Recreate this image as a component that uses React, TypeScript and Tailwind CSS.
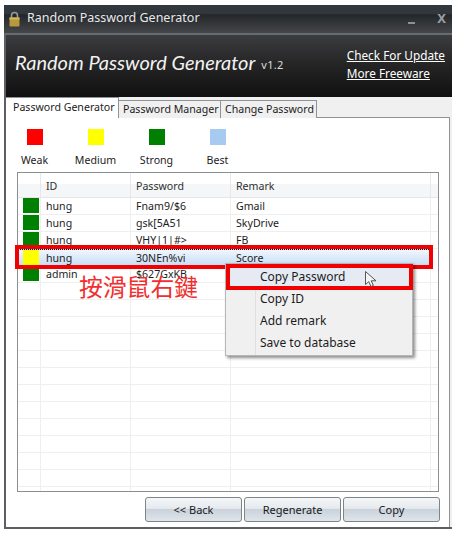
const rows = [
  { color: "bg-[#008000]", id: "hung", password: "Fnam9/$6", remark: "Gmail" },
  { color: "bg-[#008000]", id: "hung", password: "gsk[5A51", remark: "SkyDrive" },
  { color: "bg-[#008000]", id: "hung", password: "VHY|1|#>", remark: "FB" },
  { color: "bg-[#ffff00]", id: "hung", password: "30NEn%vi", remark: "Score", selected: true },
  { color: "bg-[#008000]", id: "admin", password: "$627GxKB", remark: "" },
  ...Array.from({ length: 13 }, () => ({ color: "", id: "", password: "", remark: "" })),
];

const levels = [
  { name: "Weak", color: "bg-[#ff0000]" },
  { name: "Medium", color: "bg-[#ffff00]" },
  { name: "Strong", color: "bg-[#008000]" },
  { name: "Best", color: "bg-[#a6caf0]" },
];

const buttonClass =
  "h-[25px] rounded-[3px] border border-[#7f8488] bg-[linear-gradient(#f4f6f8_0%,#e6eaee_45%,#c9d3dc_50%,#dfe5ea_100%)] text-center leading-[23px] text-[#1a1a1a]";

function Lock() {
  return (
    <svg width="11" height="16" viewBox="0 0 11 16" className="shrink-0">
      <path d="M2.5 7V4.5a3 3 0 0 1 6 0V7" fill="none" stroke="#9a9a9a" strokeWidth="1.6" />
      <rect x="0.5" y="6.5" width="10" height="9" rx="1" fill="#b8983c" />
      <rect x="0.5" y="6.5" width="10" height="2" fill="#d3b85c" />
    </svg>
  );
}

function Cursor() {
  return (
    <svg width="13" height="17" viewBox="0 0 13 17" className="absolute left-[139px] top-[7px] z-10">
      <path
        d="M0.5 0.5V13.5L3.8 10.6L6 15.5L8.4 14.4L6.2 9.8H11Z"
        fill="#f4f4f4"
        stroke="#555"
        strokeWidth="1"
      />
    </svg>
  );
}

export default function App() {
  return (
    <div
      className="h-[538px] w-[460px] overflow-hidden bg-white pl-1 pt-[5px] text-[10.6px] text-[#1c1c1c]"
      style={{ fontFamily: '"Noto Sans", "Noto Sans CJK TC", sans-serif' }}
    >
      <div className="flex h-[524px] w-[448px] flex-col border-b-2 border-l-[2px] border-[#5c5f63] bg-[#f0f0f0]">
        {/* title bar */}
        <div className="-ml-[2px] flex h-[30px] shrink-0 items-center gap-[7px] border-b-2 border-[#666b70] bg-[linear-gradient(#32373d_0%,#32373d_30%,#24272a_35%,#45474a_100%)] pl-[5px] pr-[6px]">
          <Lock />
          <span className="pb-[2px] text-[12.5px] text-[#e6e8ea]">Random Password Generator</span>
          <span className="ml-auto mt-[8px] h-[2px] w-[7px] bg-[#8c9094]"></span>
          <span className="ml-[15px] pb-[2px] text-[13px] font-bold leading-none text-[#9a9ea2]">X</span>
        </div>

        {/* header */}
        <div className="flex h-[62px] shrink-0 items-center bg-[linear-gradient(#3b3c3e_0%,#262627_45%,#101010_100%)] pl-[9px] text-white">
          <span
            className="mt-[-8px] text-[20px] italic text-[#f2f2f2]"
            style={{ fontFamily: '"Lato", sans-serif' }}
          >
            Random Password Generator
          </span>
          <span className="ml-[6px] mt-[-2px] text-[11px] tracking-[0.3px] text-[#dddddd]">v1.2</span>
          <div className="ml-auto mt-[-5px] flex flex-col gap-[2px] pr-[7px] text-[11.8px] leading-[16px] text-white underline">
            <span>Check For Update</span>
            <span>More Freeware</span>
          </div>
        </div>

        {/* tabs */}
        <div className="relative z-10 flex h-[21px] shrink-0 items-end whitespace-nowrap">
          <div className="h-[21px] w-[113px] border-r border-t border-[#8e9398] bg-white pl-[7px] leading-[19px]">
            Password Generator
          </div>
          <div className="h-[18px] w-[102px] border-r border-t border-[#8e9398] bg-[#f0f0f0] pl-[4px] leading-[17px]">
            Password Manager
          </div>
          <div className="h-[18px] w-[96px] border-r border-t border-[#8e9398] bg-[#f0f0f0] pl-[4px] leading-[17px]">
            Change Password
          </div>
        </div>

        {/* tab page */}
        <div className="mr-[2px] -mt-px flex min-h-0 flex-1 flex-col border-r border-t border-[#8e9398] bg-white pl-[11px] pr-[10px]">
          <div className="-ml-[13px] mt-[11px] flex">
            {levels.map((level) => (
              <div key={level.name} className="flex w-[61px] flex-col items-center">
                <div className={`h-4 w-4 ${level.color}`}></div>
                <span className="mt-[7px] leading-[16px]">{level.name}</span>
              </div>
            ))}
          </div>

          {/* table */}
          <div className="relative mt-[4px] h-[320px] border border-[#8a8f94] bg-white">
            <div className="h-full overflow-hidden">
              <div className="flex h-[25px] border-b border-[#e4e6e8] bg-[linear-gradient(#ffffff_0%,#ffffff_45%,#f4f6f7_45%,#f4f6f7_100%)] leading-[26px] text-[#303030]">
                <div className="w-[23px] shrink-0 border-r border-[#e6e8ea]"></div>
                <div className="w-[90px] shrink-0 border-r border-[#e6e8ea] pl-[5px]">ID</div>
                <div className="w-[100px] shrink-0 border-r border-[#e6e8ea] pl-[5px]">Password</div>
                <div className="w-[200px] shrink-0 border-r border-[#e6e8ea] pl-[5px]">Remark</div>
              </div>
              {rows.map((row, i) => (
                <div
                  key={i}
                  className={`flex h-[17px] leading-[16px] ${
                    row.selected
                      ? "w-[413px] border-y border-dotted border-black bg-[linear-gradient(#f0f6fd,#c8def6)]"
                      : "border-b border-[#efefef]"
                  }`}
                >
                  <div className={`w-[23px] shrink-0 pl-[5px] ${row.selected ? "" : "border-r border-[#efefef]"}`}>
                    {row.color && <div className={`h-[15px] w-[16px] ${row.color}`}></div>}
                  </div>
                  <div className={`w-[90px] shrink-0 pl-[5px] ${row.selected ? "" : "border-r border-[#efefef]"}`}>
                    {row.id}
                  </div>
                  <div className={`w-[100px] shrink-0 pl-[5px] ${row.selected ? "" : "border-r border-[#efefef]"}`}>
                    {row.password}
                  </div>
                  <div className={`w-[200px] shrink-0 pl-[5px] ${row.selected ? "" : "border-r border-[#efefef]"}`}>
                    {row.remark}
                  </div>
                </div>
              ))}
            </div>

            {/* annotations */}
            <div className="absolute left-[-3px] top-[72px] h-[24px] w-[418px] border-[4px] border-[#f00000]"></div>
            <div
              className="absolute left-[61px] top-[98px] text-[23.8px] leading-[30px] text-[#f03030]"
              style={{ fontFamily: '"Noto Sans CJK TC", sans-serif' }}
            >
              按滑鼠右鍵
            </div>

            {/* context menu */}
            <div className="absolute left-[207px] top-[90px] h-[93px] w-[188px] border border-[#b4b6b8] bg-[#f0f0f0] text-[12px] shadow-[2px_2px_3px_rgba(0,0,0,0.45)]">
              <div className="absolute bottom-0 left-[29px] top-0 w-px bg-[#e0e0e0]"></div>
              <div className="relative h-[24px] bg-[#e6ebf3] pl-[34px] leading-[26px]">
                Copy Password
                <Cursor />
              </div>
              <div className="h-[22px] pl-[34px] leading-[22px]">Copy ID</div>
              <div className="h-[22px] pl-[34px] leading-[22px]">Add remark</div>
              <div className="h-[22px] pl-[34px] leading-[22px]">Save to database</div>
              <div className="absolute left-0 top-0 h-[26px] w-[187px] border-[4px] border-[#f00000]"></div>
            </div>
          </div>

          {/* buttons */}
          <div className="-mr-px mt-[5px] flex justify-end gap-[2px] text-[11px]">
            <button className={`w-[97px] ${buttonClass}`}>&lt;&lt; Back</button>
            <button className={`w-[97px] ${buttonClass}`}>Regenerate</button>
            <button className={`w-[97px] ${buttonClass}`}>Copy</button>
          </div>
        </div>
      </div>
    </div>
  );
}
